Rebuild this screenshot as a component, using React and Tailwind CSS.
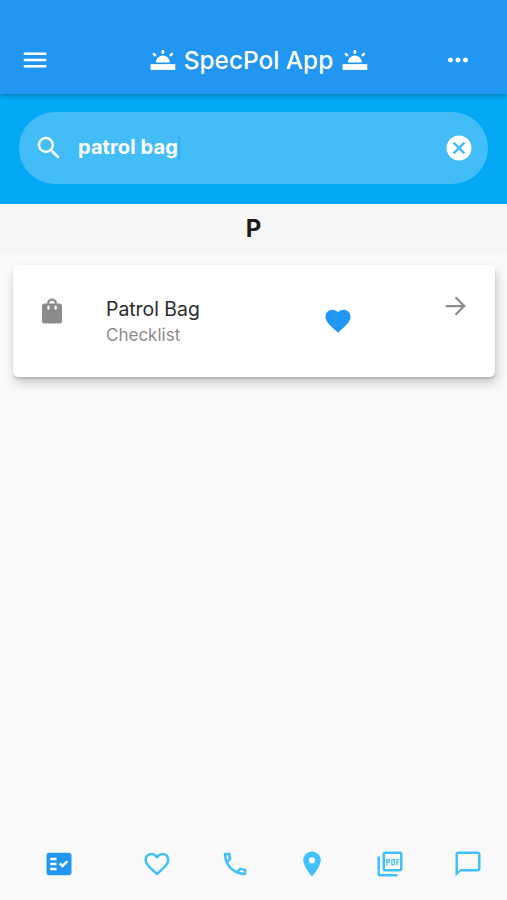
import {
    MdCancel,
    MdChatBubbleOutline,
    MdFactCheck,
    MdFavorite,
    MdFavoriteBorder,
    MdMenu,
    MdMoreHoriz,
    MdOutlinePhone,
    MdOutlinePictureAsPdf,
    MdPlace,
    MdSearch,
} from "react-icons/md";

function TwilightIcon() {

    return (

        <svg width="30" height="30" viewBox="0 0 24 24" fill="currentColor">

            <path d="M2 15.3h19.8v4.6H2z" />

            <path d="M6.3 13.9a5.6 5.6 0 0 1 11.2 0z" />

            <path d="M11.9 4v2.9M4.2 6.6l2 2.2M19.6 6.6l-2 2.2" stroke="currentColor" strokeWidth="2" />

        </svg>

    )

}

function BagIcon() {

    return (

        <svg width="30" height="30" viewBox="0 0 24 24" fill="currentColor">

            <path fillRule="evenodd" d="M6 6h12a2 2 0 0 1 2 2v12a2 2 0 0 1-2 2H6a2 2 0 0 1-2-2V8a2 2 0 0 1 2-2zM9.2 7.6a.9.9 0 0 0-.9.9v1.6a.9.9 0 0 0 1.8 0V8.500a.9.9 0 0 0-.9-.9zM14.9 7.6a.9.9 0 0 0-.9.9v1.6a.9.9 0 0 0 1.8 0V8.500a.9.9 0 0 0-.9-.9z" />

            <path d="M8.900 6.500V6a3.100 3.100 0 0 1 6.200 0v.5" fill="none" stroke="currentColor" strokeWidth="1.8" />

        </svg>

    )

}

function ArrowIcon() {

    return (

        <svg width="30" height="30" viewBox="0 0 24 24" fill="none" stroke="currentColor" strokeWidth="1.8">

            <path d="M3.7 12h14.6M11.6 5l7 7-7 7" />

        </svg>

    )

}

function Header() {

    return (

        <header className="relative z-10 h-[94px] pt-[26px] px-5 bg-[#2196f3] text-white flex items-center justify-between shadow-[0_1px_5px_rgba(0,0,0,0.35)]">

            <MdMenu size={30} />

            <h1 className="flex items-center gap-[7px] ml-[25px] text-[24.4px] font-medium whitespace-nowrap">

                <TwilightIcon />

                <span className="-ml-px">SpecPol App</span>

                <TwilightIcon />

            </h1>

            <MdMoreHoriz size={30} className="mr-[14px]" />

        </header>

    )

}

function SearchBar() {

    return (

        <div className="h-[110px] pt-[18px] px-[19px] bg-[#03a9f4]">

            <div className="h-[72px] rounded-full bg-[#42bdf8] text-white flex items-center pl-[15px] pr-[14px]">

                <MdSearch size={30} />

                <span className="ml-[14px] pb-[2px] text-[20px] font-bold leading-6 tracking-[0.1px]">patrol bag</span>

                {/* Text cursor */}

                <span className="w-[2px] h-6 bg-[#2fb0f5]"></span>

                <MdCancel size={30} className="ml-auto" />

            </div>

        </div>

    )

}

function ResultCard() {

    return (

        <div className="mt-[13px] ml-[13px] mr-3 h-[112px] rounded-[5px] bg-white flex items-start shadow-[0_2px_2px_rgba(0,0,0,0.14),2px_6px_12px_rgba(0,0,0,0.2)]">

            <div className="ml-6 mt-[31px] text-[#8b8b8b]">

                <BagIcon />

            </div>

            <div className="ml-[39px] mt-8 w-[218px]">

                <h3 className="text-[19.4px] leading-6 text-[#2b2b2b]">Patrol Bag</h3>

                <p className="mt-[2px] text-[17px] leading-6 text-[#8b8b8b]">Checklist</p>

            </div>

            <MdFavorite size={30} className="mt-[41px] -ml-px text-[#2196f3]" />

            <div className="ml-auto mr-6 mt-[26px] text-[#8b8b8b]">

                <ArrowIcon />

            </div>

        </div>

    )

}

function BottomNav() {

    return (

        <nav className="h-[72px] pb-[2px] grid grid-cols-[118px_repeat(5,1fr)] items-center justify-items-center bg-[#fafafa] border-t border-[#f6f6f6] text-[#40c0fc]">

            <MdFactCheck size={30} className="text-[#2196f3]" />

            <MdFavoriteBorder size={30} />

            <MdOutlinePhone size={30} />

            <MdPlace size={30} />

            <MdOutlinePictureAsPdf size={30} />

            <MdChatBubbleOutline size={30} />

        </nav>

    )

}

function App() {

    return (

        <div className="w-full h-screen flex flex-col bg-[#fafafa] font-['Inter',sans-serif]">

            <Header />

            <SearchBar />

            <main className="flex-1">

                <h2 className="h-12 bg-[#f6f6f6] text-center text-[24px] leading-[49px] font-bold text-[#1c1c1c]">P</h2>

                <ResultCard />

            </main>

            <BottomNav />

        </div>

    )

}

export default App;
